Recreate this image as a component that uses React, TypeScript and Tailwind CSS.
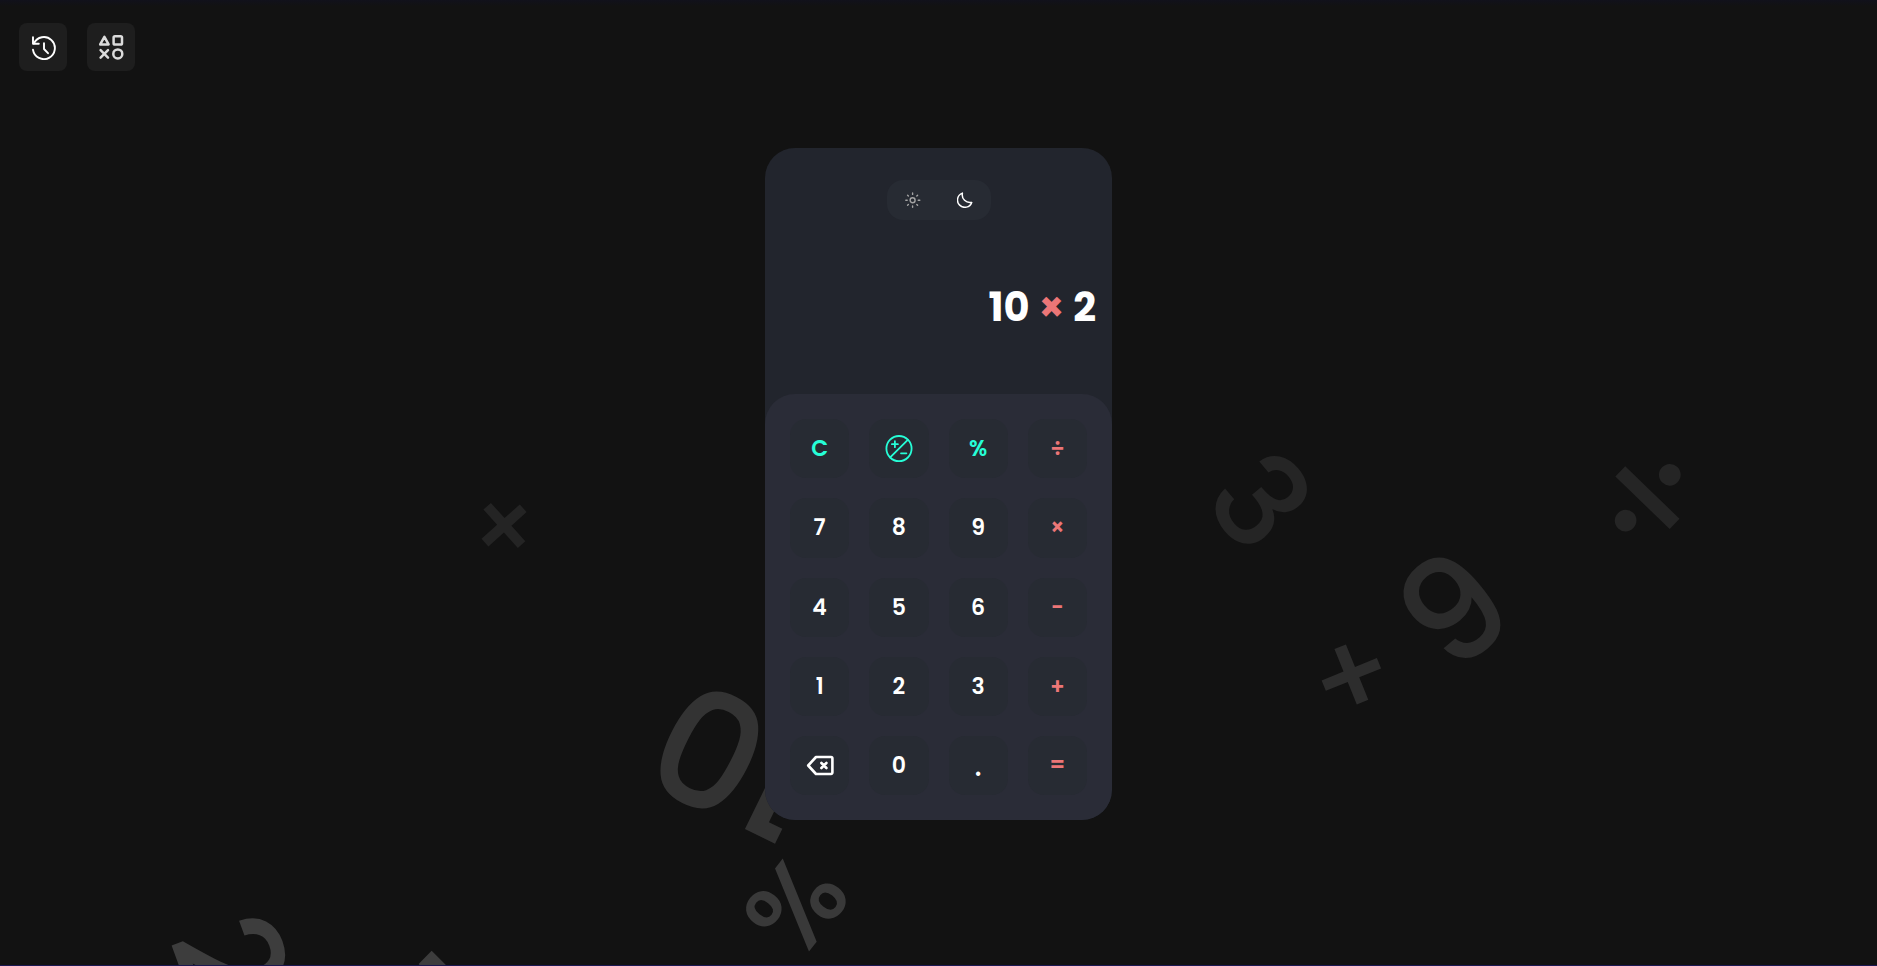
import { useState, type ReactNode } from "react";

const floaters = [
  { glyph: "×", place: "left-[504px] top-[527px] rotate-[3deg] text-[97px] text-[#242424]" },
  { glyph: "3", place: "left-[1259px] top-[502px] rotate-[50deg] text-[129px] text-[#252525]" },
  { glyph: "÷", place: "left-[1645px] top-[499px] rotate-[44deg] text-[148px] text-[#252525]" },
  { glyph: "9", place: "left-[1454px] top-[611px] rotate-[-40deg] text-[145px] text-[#2b2b2b]" },
  { glyph: "+", place: "left-[1352px] top-[676px] rotate-[-22deg] text-[117px] text-[#2d2d2d]" },
  { glyph: "0", place: "left-[708px] top-[753px] rotate-[27deg] text-[161px] text-[#333333]" },
  { glyph: "1", place: "left-[783px] top-[780px] rotate-[206deg] text-[161px] text-[#333333]" },
  { glyph: "%", place: "left-[796px] top-[905px] rotate-[-52deg] text-[112px] text-[#393939]" },
  { glyph: "2", place: "left-[229px] top-[961px] rotate-[70deg] text-[144px] text-[#3d3d3d]" },
  { glyph: "7", place: "left-[413px] top-[1034px] rotate-[45deg] text-[190px] text-[#3d3d3d]" },
];

function HistoryIcon() {
  return (
    <svg viewBox="0 0 26 26" className="size-[26px]" fill="none" stroke="currentColor" strokeWidth="1.9" strokeLinecap="round" strokeLinejoin="round" aria-hidden="true">
      <path d="M3 3.2v6.5h5.8" />
      <path d="M3.9 9.4A11 11 0 1 1 3 15.8" />
      <path d="M14 9.3v5.7l4 4.2" />
    </svg>
  );
}

function ShapesIcon() {
  return (
    <svg viewBox="0 0 26 26" className="size-[26px]" fill="none" stroke="currentColor" strokeWidth="2.5" strokeLinecap="round" strokeLinejoin="round" aria-hidden="true">
      <path d="M6.4 2.8 10.6 10.4H2.2Z" />
      <rect x="15.6" y="2.2" width="8.4" height="8.4" rx="1.4" />
      <path d="m2.6 16.2 7.4 7.4M10 16.2l-7.4 7.4" />
      <circle cx="19.8" cy="19.9" r="4.5" />
    </svg>
  );
}

function SunIcon() {
  return (
    <svg viewBox="0 0 16 16" className="size-4" fill="none" stroke="currentColor" strokeWidth="1.4" strokeLinecap="round" aria-hidden="true">
      <circle cx="7.6" cy="8.2" r="2.5" />
      <path d="M7.6.9v1.5M7.6 14v1.3M.8 8.2h1.4M13.2 8.2h1.6M2.6 3.2l.8.8M11.8 12.4l.8.8M2.6 13.2l.8-.8M11.8 4l.8-.8" />
    </svg>
  );
}

function MoonIcon() {
  return (
    <svg viewBox="0 0 16 16" className="size-4" fill="none" stroke="currentColor" strokeWidth="1.5" strokeLinejoin="round" aria-hidden="true">
      <path d="M5.4 1.1A7.3 7.3 0 1 0 14.7 10.4C9.1 11.4 4.3 6.9 5.4 1.1Z" />
    </svg>
  );
}

function SignIcon() {
  return (
    <svg viewBox="0 0 28 28" className="size-7" fill="none" stroke="currentColor" strokeWidth="1.8" strokeLinecap="round" aria-hidden="true">
      <circle cx="14" cy="13.6" r="12.6" />
      <path d="M5.2 22.4 22.8 4.8M9.9 6.2v6M6.9 9.2h6M16 18.3h5.4" />
    </svg>
  );
}

function DeleteIcon() {
  return (
    <svg viewBox="0 0 28 28" className="size-7" fill="none" stroke="currentColor" strokeWidth="2.6" strokeLinecap="round" strokeLinejoin="round" aria-hidden="true">
      <path d="M10 5H25a1.4 1.4 0 0 1 1.4 1.4V20.6a1.4 1.4 0 0 1-1.4 1.4H10L2.2 13.5Z" />
      <path d="m15.4 11 5 5M20.4 11l-5 5" />
    </svg>
  );
}

const accent = "text-[#26fed7]";
const operator = "text-[#ec7677]";
const digit = "text-white";

const keys: { name: string; face: ReactNode; tone: string }[] = [
  { name: "Clear", face: "C", tone: accent },
  { name: "Toggle sign", face: <SignIcon />, tone: accent },
  { name: "Percent", face: "%", tone: accent },
  { name: "Divide", face: "÷", tone: operator },
  { name: "7", face: "7", tone: digit },
  { name: "8", face: "8", tone: digit },
  { name: "9", face: "9", tone: digit },
  { name: "Multiply", face: "×", tone: operator },
  { name: "4", face: "4", tone: digit },
  { name: "5", face: "5", tone: digit },
  { name: "6", face: "6", tone: digit },
  { name: "Subtract", face: "-", tone: operator },
  { name: "1", face: "1", tone: digit },
  { name: "2", face: "2", tone: digit },
  { name: "3", face: "3", tone: digit },
  { name: "Add", face: "+", tone: operator },
  { name: "Delete", face: <DeleteIcon />, tone: digit },
  { name: "0", face: "0", tone: digit },
  { name: "Decimal point", face: <span className="text-3xl font-medium">.</span>, tone: digit },
  { name: "Equals", face: "=", tone: operator },
];

export default function App() {
  const [dark, setDark] = useState(true);

  return (
    <div className="relative flex min-h-screen flex-col overflow-hidden border-b border-[#1b1852] bg-[linear-gradient(#11111b,#121212_6px)] font-[Poppins,Inter,sans-serif]">
      <div aria-hidden="true" className="pointer-events-none absolute inset-0 overflow-hidden">
        {floaters.map((f) => (
          <span key={f.glyph} className={`absolute -translate-x-1/2 -translate-y-1/2 leading-none font-medium select-none ${f.place}`}>
            {f.glyph}
          </span>
        ))}
      </div>

      <header className="relative flex gap-5 px-[19px] pt-[23px]">
        <button type="button" aria-label="History" className="grid size-12 place-items-center rounded-lg bg-[#1e1e1e] text-white">
          <HistoryIcon />
        </button>
        <button type="button" aria-label="Shapes" className="grid size-12 place-items-center rounded-lg bg-[#1e1e1e] text-[#dcdcdc]">
          <ShapesIcon />
        </button>
      </header>

      <main className="relative mx-auto mt-[77px] w-[347px] overflow-hidden rounded-[30px] bg-[#22252d]">
        <div className="flex justify-center pt-8">
          <div className="grid h-10 w-[104px] grid-cols-2 rounded-2xl bg-[#272b33]">
            <button type="button" aria-label="Light theme" aria-pressed={!dark} onClick={() => setDark(false)} className="grid place-items-center text-[#a3a3a3]">
              <SunIcon />
            </button>
            <button type="button" aria-label="Dark theme" aria-pressed={dark} onClick={() => setDark(true)} className="grid place-items-center text-white">
              <MoonIcon />
            </button>
          </div>
        </div>

        <output className="flex h-[174px] items-center justify-end gap-[9px] px-4 text-[40px] font-bold text-white">
          <span>10</span>
          <span className={operator}>×</span>
          <span>2</span>
        </output>

        <div className="grid grid-cols-4 gap-5 rounded-[30px] bg-[#2a2c37] p-[25px]">
          {keys.map((k) => (
            <button key={k.name} type="button" aria-label={k.name} className={`grid aspect-square place-items-center rounded-2xl bg-[#272b33] text-[22px] font-semibold ${k.tone}`}>
              {k.face}
            </button>
          ))}
        </div>
      </main>
    </div>
  );
}
